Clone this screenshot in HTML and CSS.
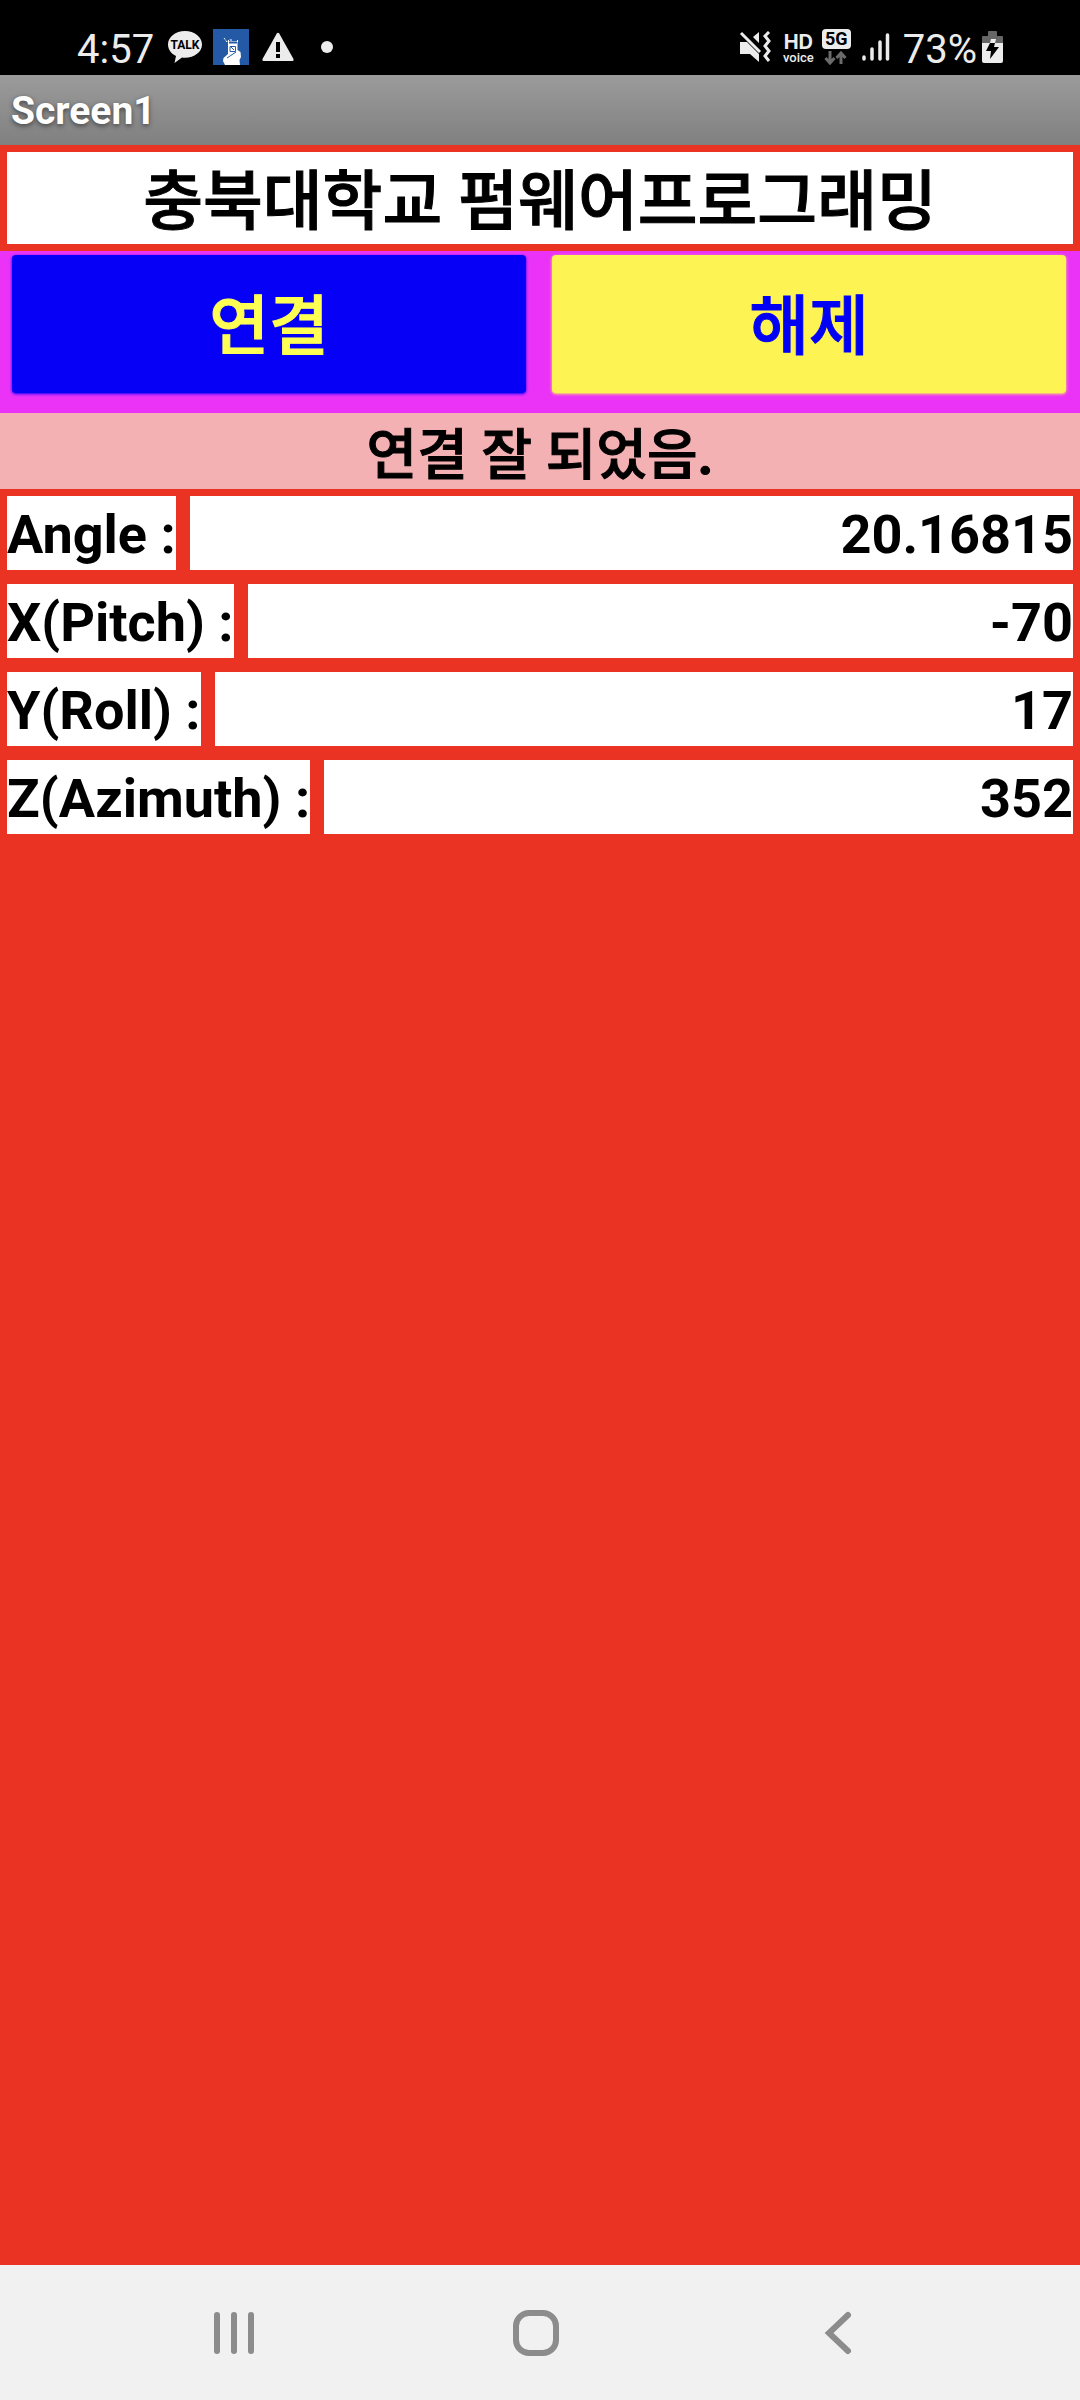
FILE: index.html
```html
<!DOCTYPE html>
<html lang="ko">
<head>
<meta charset="utf-8">
<meta name="viewport" content="width=device-width, initial-scale=1">
<title>Screen1</title>
<link rel="stylesheet" href="styles.css">
</head>
<body>
<div class="statusbar">
  <div class="status-left">
    <span class="status-text">4:57</span>
    <svg class="icon-talk" width="36" height="34" viewBox="0 0 36 34" aria-hidden="true">
      <path fill="#ececec" d="M18 1C8.500 1 1 7 1 14.500c0 5 3.200 9.200 8 11.500L7.500 33l7.500-5.500c1 .2 2 .2 3 .2 9.500 0 17-5.900 17-13.200S27.500 1 18 1z"/>
      <text x="18" y="19" text-anchor="middle" class="talk-text">TALK</text>
    </svg>
    <svg class="icon-app" width="36" height="36" viewBox="0 0 36 36" aria-hidden="true">
      <path fill="#2459a6" d="M0 0h36v36H0z"/>
      <path fill="#fff" d="M15 12h9.500v9l3 2 .5 5-1.500 3 .5 5H12l-2-4 .5-3 4.500-4z"/>
      <path fill="#2459a6" d="M16 12.500h8v2h-8z"/>
      <path fill="none" stroke="#2459a6" d="M17 17.500h5.500v5H17zM18 18l3 3M14 29l9-6"/>
      <path fill="none" stroke="#fff" stroke-dasharray="2 1" d="M11 9l3 4 3-3M17 11h3M24.500 11v2"/>
    </svg>
    <svg class="icon-warning" width="34" height="30" viewBox="0 0 34 30" aria-hidden="true">
      <path fill="#ececec" d="M15.800 1.500Q17 0 18.200 1.500L32.500 27q.6 1.800-1 2h-29q-1.600-.2-1-2z"/>
      <path d="M15 10h4v10h-4zM15 22h4v4h-4z"/>
    </svg>
    <span class="dot"></span>
  </div>
  <div class="status-right">
    <svg width="32" height="32" viewBox="0 0 32 32" aria-hidden="true">
      <path fill="#ececec" d="M1 11h7l12 12v8l-9-8H1zM14 6l6-5v11z"/>
      <path fill="none" stroke="#ececec" stroke-width="3" d="M2 2l19 19M30 1l-4 4 4 5-4 5 4 5-4 5 4 5"/>
    </svg>
    <span class="hd-voice"><b>HD</b><span>voice</span></span>
    <span class="network">
      <b>5G</b>
      <svg width="24" height="14" viewBox="0 0 24 14" aria-hidden="true">
        <path fill="none" stroke="#6b6b6b" stroke-width="3" d="M6 0v12M1.500 7L6 12l4.500-5M17 13V2M12.500 7L17 2l4.500 5"/>
      </svg>
    </span>
    <svg class="icon-signal" width="30" height="30" viewBox="0 0 30 30" aria-hidden="true">
      <path fill="none" stroke="#ececec" stroke-width="3.500" stroke-linecap="round" d="M3 25v2M11 17v10M19 10v17M26.500 3v24"/>
    </svg>
    <span class="status-text">73%</span>
    <svg class="icon-battery" width="22" height="32" viewBox="0 0 22 32" aria-hidden="true">
      <path fill="#666" d="M6 1q0-1 1-1h7q1 0 1 1v4h5q1 0 1 1v6H0V6q0-1 1-1h5z"/>
      <path fill="#ececec" d="M0 12h21v18q0 2-2 2H2q-2 0-2-2z"/>
      <path fill="#ececec" d="M9 8h5l-1 4H8z"/>
      <path d="M8 12h5l-1 4h5L8 28l1-8H4z"/>
    </svg>
  </div>
</div>
<header class="titlebar">Screen1</header>
<main class="screen">
  <h1 class="heading">충북대학교 펌웨어프로그래밍</h1>
  <div class="actions">
    <button class="action connect" type="button">연결</button>
    <button class="action disconnect" type="button">해제</button>
  </div>
  <p class="message">연결 잘 되었음<b>.</b></p>
  <div class="reading"><label for="angle">Angle :</label><output id="angle">20.16815</output></div>
  <div class="reading"><label for="pitch">X(Pitch) :</label><output id="pitch">-70</output></div>
  <div class="reading"><label for="roll">Y(Roll) :</label><output id="roll">17</output></div>
  <div class="reading"><label for="azimuth">Z(Azimuth) :</label><output id="azimuth">352</output></div>
</main>
<nav class="navbar">
  <button type="button" aria-label="Recent apps">
    <svg width="48" height="48" viewBox="0 0 48 48"><path d="M7 6v36M24 6v36M41 6v36"/></svg>
  </button>
  <button type="button" aria-label="Home">
    <svg width="48" height="48" viewBox="0 0 48 48"><rect x="4" y="4" width="40" height="40" rx="13"/></svg>
  </button>
  <button type="button" aria-label="Back">
    <svg width="48" height="48" viewBox="0 0 48 48"><path d="M34 6L15 24l19 18"/></svg>
  </button>
</nav>
</body>
</html>
```
FILE: styles.css
```css
* {
  box-sizing: border-box;
}

body {
  margin: 0;
  min-height: 100vh;
  display: flex;
  flex-direction: column;
  font-family: Roboto, "Noto Sans CJK KR", sans-serif;
  background: #eb3323;
  color: #000;
}

svg {
  display: block;
  flex: none;
}

/* Status bar */
.statusbar {
  display: flex;
  justify-content: space-between;
  height: 75px;
  padding: 19px 76px 0 77px;
  background: #000;
  color: #ececec;
}

.status-left,
.status-right {
  display: flex;
  align-items: center;
  height: 56px;
}

.status-text {
  font-size: 40px;
  line-height: 50px;
  padding-top: 6px;
}

.icon-talk {
  margin-left: 13px;
}

.talk-text {
  font: 700 12px Roboto, sans-serif;
  fill: #000;
}

.icon-app {
  margin-left: 10px;
}

.icon-warning {
  margin-left: 12px;
}

.dot {
  width: 12px;
  height: 12px;
  margin-left: 26px;
  border-radius: 50%;
  background: #ececec;
}

.hd-voice {
  display: flex;
  flex-direction: column;
  align-items: center;
  margin-left: 12px;
  padding-top: 2px;
}

.hd-voice b {
  font: 700 20px/18px Inter, sans-serif;
}

.hd-voice span {
  font-size: 13px;
  font-weight: 500;
  line-height: 13px;
}

.network {
  display: flex;
  flex-direction: column;
  align-items: center;
  gap: 2px;
  margin-left: 8px;
}

.network b {
  width: 29px;
  border-radius: 4px;
  background: #ececec;
  color: #000;
  font-size: 18px;
  line-height: 20px;
  text-align: center;
}

.icon-signal {
  margin-left: 10px;
}

.status-right .status-text {
  margin-left: 12px;
}

.icon-battery {
  margin-left: 5px;
}

/* App title */
.titlebar {
  height: 70px;
  padding-left: 11px;
  background: linear-gradient(#9b9b9b, #808080);
  color: #fff;
  font-size: 39px;
  font-weight: 700;
  line-height: 72px;
  text-shadow: 0 2px 5px #444;
}

/* App content */
.screen {
  flex: 1;
}

.heading,
.action,
.message {
  font-weight: 500;
  -webkit-text-stroke: 1px;
}

.heading {
  margin: 7px;
  padding-top: 8px;
  background: #fff;
  font-size: 65px;
  line-height: 84px;
  text-align: center;
}

.actions {
  display: grid;
  grid-template-columns: 1fr 1fr;
  gap: 26px;
  padding: 4px 14px 20px 12px;
  background: #eb33f7;
}

.action {
  height: 138px;
  padding: 6px 0 0;
  border: 0;
  border-radius: 4px;
  font-family: inherit;
  font-size: 65px;
  line-height: 84px;
}

.connect {
  background: #0600f7;
  color: #ffff54;
  box-shadow: 0 1px 3px #0600f7;
}

.disconnect {
  background: #fdf453;
  color: #0000f5;
  box-shadow: 0 1px 3px #fdf453;
}

.message {
  margin: 0;
  padding-top: 8px;
  background: #f4b1b3;
  font-size: 55px;
  line-height: 68px;
  text-align: center;
}

.reading {
  display: flex;
  gap: 14px;
  padding: 7px;
  font-size: 54px;
  font-weight: 700;
  line-height: 70px;
}

.reading label,
.reading output {
  padding-top: 4px;
  background: #fff;
}

.reading output {
  flex: 1;
  text-align: right;
}

/* Navigation bar */
.navbar {
  display: grid;
  grid-template-columns: repeat(3, 1fr);
  justify-items: center;
  height: 135px;
  padding: 0 91px 0 83px;
  background: #f1f1f1;
}

.navbar button {
  width: 120px;
  padding: 0;
  border: 0;
  background: none;
}

.navbar svg {
  margin: auto;
  fill: none;
  stroke: #8c8c8c;
  stroke-width: 6px;
  stroke-linecap: round;
}
```
